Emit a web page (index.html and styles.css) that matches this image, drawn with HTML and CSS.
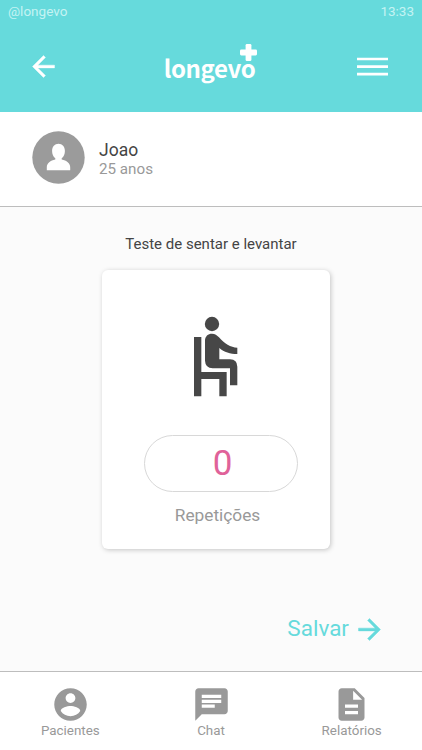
FILE: index.html
```html
<!DOCTYPE html>
<html lang="pt-BR">
<head>
<meta charset="utf-8">
<title>longevo</title>
<link rel="stylesheet" href="styles.css">
</head>
<body>
<div class="app">
  <header class="header">
    <div class="status"><span>@longevo</span><span>13:33</span></div>
    <div class="bar">
      <svg class="back" viewBox="0 0 24 24"><path d="M20 11H7.830l5.590-5.590L12 4l-8 8 8 8 1.410-1.410L7.830 13H20z"/></svg>
      <div class="logo">longevo<svg class="plus" viewBox="0 0 17 17"><rect x="5.600" width="5.800" height="17" rx="1.300"/><rect y="5.600" width="17" height="5.800" rx="1.300"/></svg></div>
      <svg class="menu" viewBox="0 0 31 19"><path d="M0 2h31M0 9.600h31M0 17.200h31"/></svg>
    </div>
  </header>
  <section class="patient">
    <svg class="avatar" viewBox="0 0 53 53"><circle cx="26.500" cy="26.500" r="26.200"/><path d="M26.500 12.800c-3.800 0-6.400 3-6.400 7.200 0 3.300 1.200 5.800 3.200 7.200v1.300c-4.800 1-8.500 3.800-8.500 7.700v3h23.400v-3c0-3.900-3.700-6.700-8.500-7.700v-1.300c2-1.400 3.200-3.900 3.200-7.200 0-4.200-2.600-7.200-6.400-7.200z"/></svg>
    <div class="info"><div class="name">Joao</div><div class="age">25 anos</div></div>
  </section>
  <main class="main">
    <h1 class="title">Teste de sentar e levantar</h1>
    <div class="card">
      <svg class="sitting" viewBox="60 45 150 250">
        <circle cx="126" cy="72" r="21.500"/>
        <path d="M72 111H94V216H170V289H148V237H94V289H72Z"/>
        <path d="M105 122C105 109 114 101 126 101C135 101 141 106 147 112C163 130 182 143 202 143V162C181 162 162 157 148 144V178H180Q202 179 202 200V256H180V205H128Q106 204 105 182Z"/>
      </svg>
      <div class="count">0</div>
      <div class="unit">Repetições</div>
    </div>
    <div class="save"><span>Salvar</span><svg viewBox="0 0 24 24"><path d="M12 4l-1.410 1.410L16.170 11H4v2h12.170l-5.580 5.590L12 20l8-8z"/></svg></div>
  </main>
  <nav class="tabs">
    <div class="tab"><svg viewBox="0 0 24 24"><path d="M12 2C6.480 2 2 6.480 2 12s4.480 10 10 10 10-4.480 10-10S17.520 2 12 2zm0 3c1.660 0 3 1.340 3 3s-1.340 3-3 3-3-1.340-3-3 1.340-3 3-3zm0 14.200c-2.500 0-4.710-1.280-6-3.220.03-1.990 4-3.080 6-3.080 1.990 0 5.970 1.090 6 3.080-1.290 1.940-3.500 3.220-6 3.220z"/></svg><span>Pacientes</span></div>
    <div class="tab"><svg viewBox="0 0 24 24"><path d="M20 2H4c-1.100 0-1.990.9-1.990 2L2 22l4-4h14c1.100 0 2-.9 2-2V4c0-1.100-.9-2-2-2zM6 9h12v2H6V9zm8 5H6v-2h8v2zm4-6H6V6h12v2z"/></svg><span>Chat</span></div>
    <div class="tab"><svg viewBox="0 0 24 24"><path d="M14 2H6c-1.100 0-1.990.9-1.990 2L4 20c0 1.100.89 2 1.990 2H18c1.100 0 2-.9 2-2V8l-6-6zm2 16H8v-2h8v2zm0-4H8v-2h8v2zm-3-5V3.500L18.500 9H13z"/></svg><span>Relatórios</span></div>
  </nav>
</div>
</body>
</html>
```
FILE: styles.css
```css
* { box-sizing: border-box; }
body { margin: 0; font-family: Roboto, sans-serif; color: #444; }
svg { display: block; flex: none; }
.app { width: 422px; height: 750px; display: flex; flex-direction: column; background: #fff; overflow: hidden; }
.header { height: 112px; background: #66dadc; color: #fff; }
.status { height: 22px; padding: 0 8px; display: flex; justify-content: space-between; font-size: 13.5px; line-height: 22px; color: #c4f3f3; }
.bar { height: 88px; padding: 0 34px 0 27px; display: flex; justify-content: space-between; align-items: center; }
.back { width: 33px; height: 33px; fill: #fff; stroke: #fff; stroke-width: .3; }
.logo { position: relative; font: 700 24px/34px "Noto Sans CJK SC", sans-serif; letter-spacing: -.4px; margin: 3px 0 0 2px; }
.plus { position: absolute; right: -2px; top: -7px; width: 17px; height: 17px; fill: #fff; }
.menu { width: 31px; height: 19px; stroke: #fff; stroke-width: 2.700; }
.patient { height: 95px; padding: 19px 0 0 31.5px; display: flex; align-items: flex-start; border-bottom: 1px solid #bdbdbd; }
.avatar { width: 53px; height: 53px; fill: #9b9b9b; }
.avatar path { fill: #fff; }
.info { margin: 9px 0 0 14.5px; }
.name { font-size: 17.5px; line-height: 20px; color: #444; }
.age { font-size: 15.2px; line-height: 18px; color: #999; }
.main { height: 464px; background: #fbfbfb; display: flex; flex-direction: column; align-items: center; }
.title { margin: 27px 0 16px; font-size: 15px; line-height: 20px; font-weight: 400; }
.card { width: 228px; height: 279px; margin-left: 9px; padding-top: 45px; background: #fff; border-radius: 6px; box-shadow: 1px 1px 5px rgba(0,0,0,.22); display: flex; flex-direction: column; align-items: center; }
.sitting { width: 50px; height: 83.300px; fill: #474747; margin-right: 1px; }
.count { width: 154px; height: 57px; margin: 37px 0 0 10px; padding-left: 4px; border: 1px solid #d8d8d8; border-radius: 29px; font-size: 35px; line-height: 55px; text-align: center; color: #e06299; }
.unit { margin-top: 13px; margin-left: 4px; font-size: 17.3px; line-height: 20px; color: #999; }
.save { align-self: flex-end; margin: 60px 36px 0 0; display: flex; align-items: center; font-size: 22.5px; line-height: 34px; color: #66dadc; }
.save svg { width: 33px; height: 33px; margin: 4px 0 0 4px; fill: #66dadc; stroke: #66dadc; stroke-width: .3; }
.tabs { height: 79px; border-top: 1px solid #bdbdbd; padding-top: 13px; display: flex; background: #fff; }
.tab { flex: 1; display: flex; flex-direction: column; align-items: center; font-size: 13.400px; line-height: 14px; color: #999; }
.tab svg { width: 39px; height: 39px; fill: #999; }
```
